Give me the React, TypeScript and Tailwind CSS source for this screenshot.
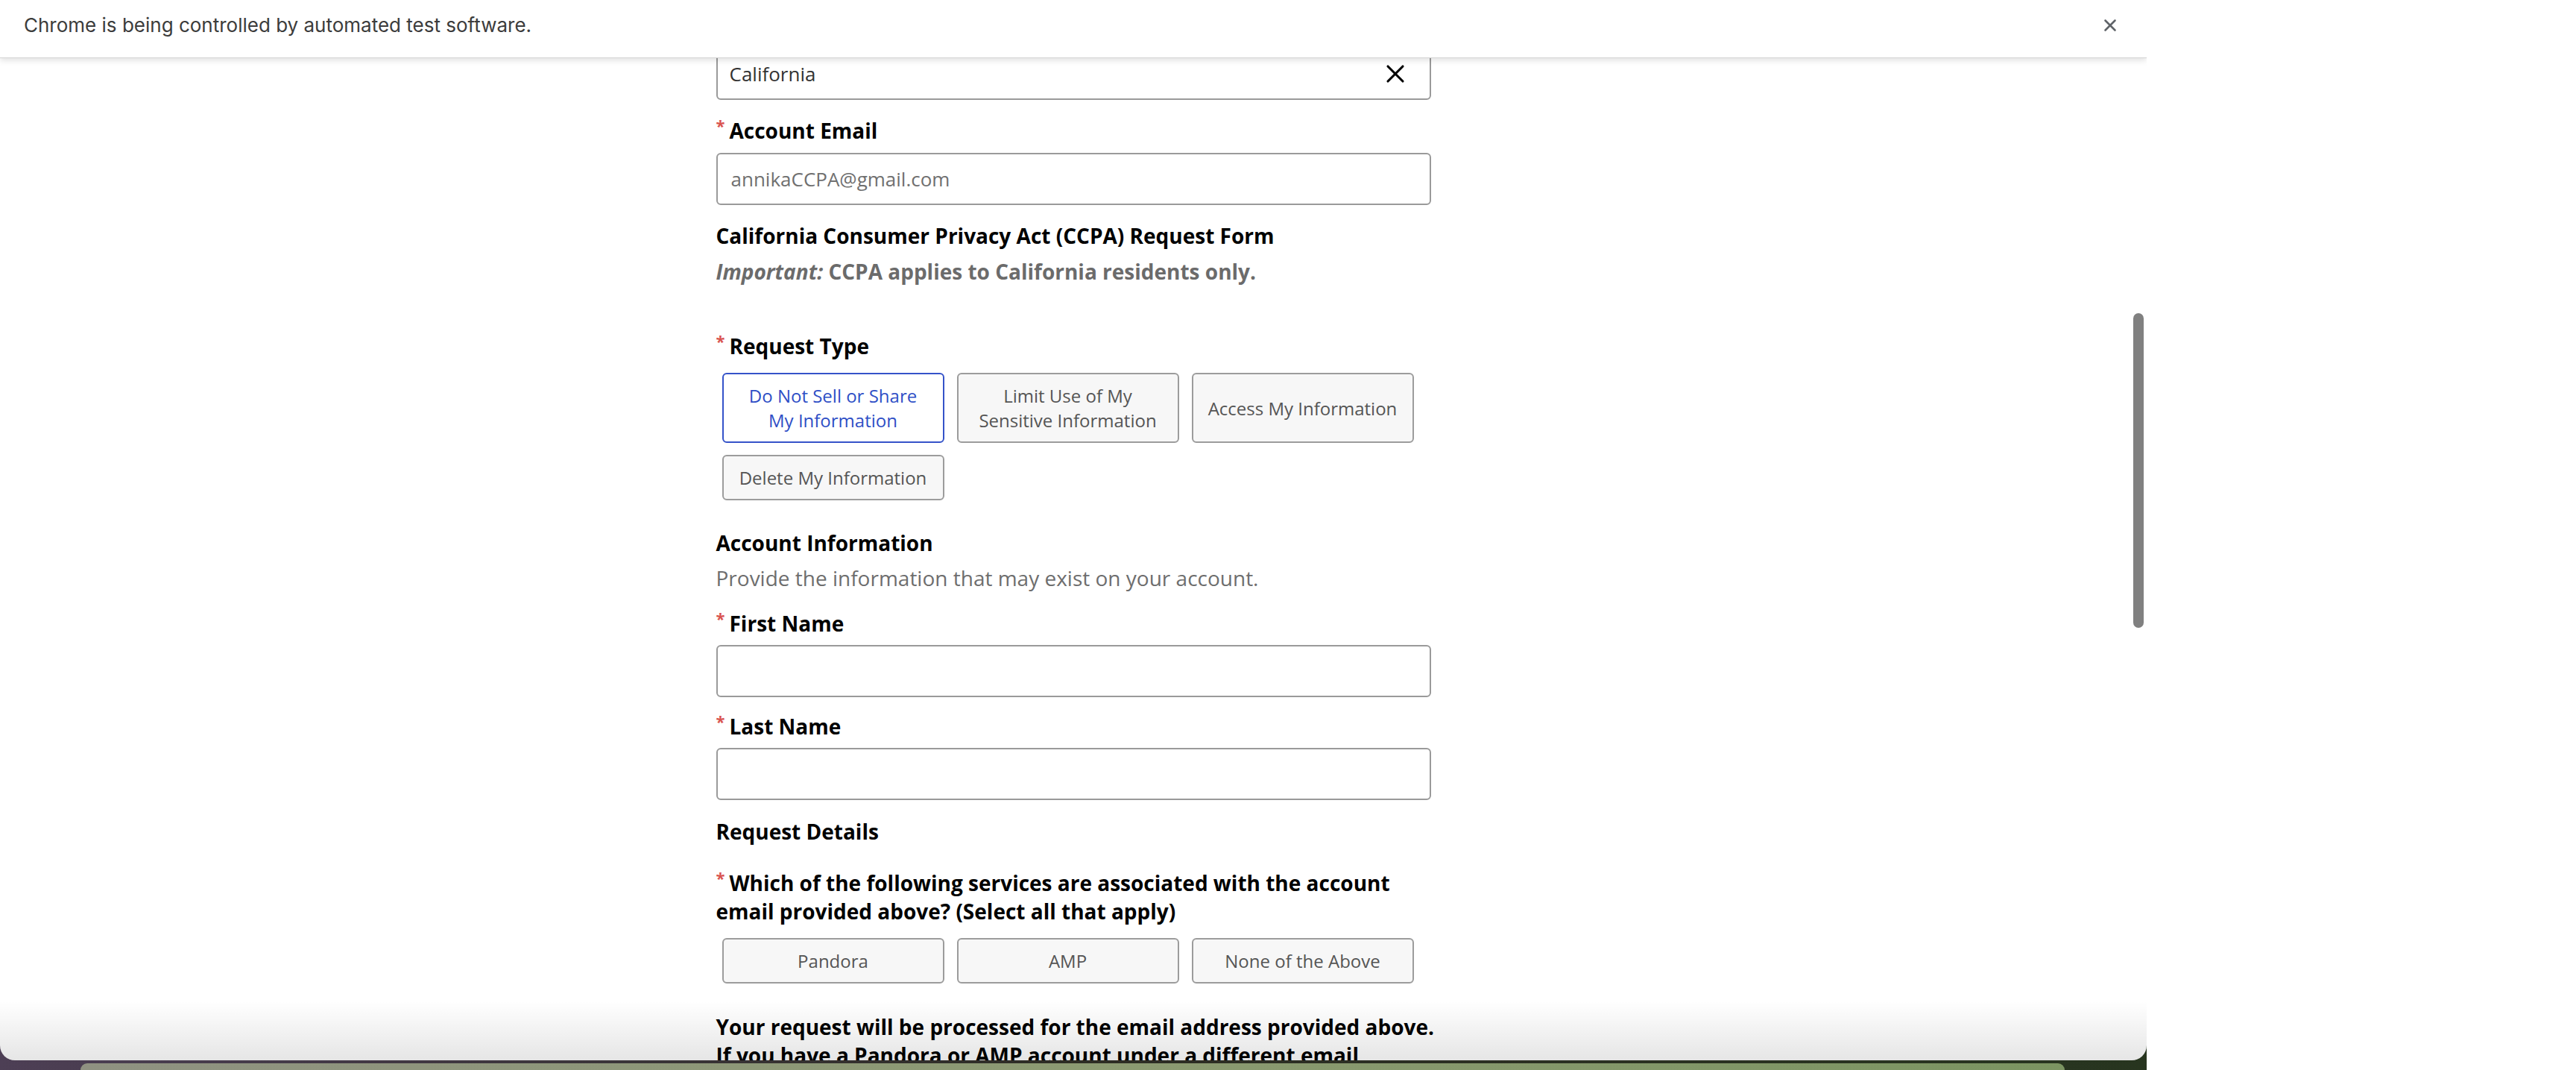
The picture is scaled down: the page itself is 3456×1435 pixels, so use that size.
import { X } from "lucide-react";

const font = { fontFamily: '"Open Sans", "Noto Sans", sans-serif' };

function Req() {
  return (
    <span className="mr-[6px] inline-block align-top text-[22px] leading-[24px] font-bold text-[#d9534f]">
      *
    </span>
  );
}

function Label({ children, required = true }: { children: React.ReactNode; required?: boolean }) {
  return (
    <div className="text-[28px] font-bold leading-[38px] text-black">
      {required && <Req />}
      {children}
    </div>
  );
}

function Field({ value, muted }: { value?: string; muted?: boolean }) {
  return (
    <div
      className={
        "flex h-[70px] items-center rounded-[6px] border-2 border-[#9a9a9a] bg-white px-[18px] text-[26px] " +
        (muted ? "text-[#707070]" : "text-[#333]")
      }
    >
      {value}
    </div>
  );
}

function Choice({ text, selected }: { text: string[]; selected?: boolean }) {
  return (
    <div
      className={
        "flex w-[298px] flex-col items-center justify-center rounded-[6px] border-2 px-[10px] py-[12px] text-center text-[24px] leading-[33px] " +
        (selected
          ? "border-[#3553c9] bg-white text-[#2f4fc6]"
          : "border-[#9c9c9c] bg-[#f7f7f7] text-[#555]")
      }
    >
      {text.map((t) => (
        <span key={t}>{t}</span>
      ))}
    </div>
  );
}

export default function App() {
  return (
    <div className="flex h-[1435px] w-[3456px] overflow-hidden bg-white" style={font}>
      <div className="flex w-[2880px] flex-col bg-gradient-to-r from-[#4d3f55] via-[#2d2c24] to-[#27351f]">
        <div className="relative flex h-[1422px] flex-col overflow-hidden rounded-b-[20px] bg-white">
          {/* automation infobar */}
          <div
            className="relative z-10 flex h-[78px] shrink-0 items-center justify-between border-b border-[#d4d4d4] bg-white pr-[36px] pl-[32px] pb-[10px] shadow-[0_3px_8px_rgba(0,0,0,0.12)]"
            style={{ fontFamily: "Inter, Roboto, sans-serif" }}
          >
            <span className="text-[26px] text-[#3c3c3c]">
              Chrome is being controlled by automated test software.
            </span>
            <X size={26} strokeWidth={2.4} className="text-[#5f6368]" />
          </div>

          <div className="relative flex-1 overflow-hidden">
            <div className="mx-auto -mt-[14px] w-[959px]">
              <div className="flex h-[70px] items-center justify-between rounded-[6px] border-2 border-[#9a9a9a] bg-white pr-[26px] pl-[16px] text-[26px] text-[#333]">
                <span>California</span>
                <X size={40} strokeWidth={1.9} className="text-black" />
              </div>

              <div className="mt-[22px]">
                <Label>Account Email</Label>
              </div>
              <div className="mt-[11px]">
                <Field value="annikaCCPA@gmail.com" muted />
              </div>

              <div className="mt-[22px] text-[28px] font-bold leading-[38px] text-black">
                California Consumer Privacy Act (CCPA) Request Form
              </div>
              <div className="mt-[10px] text-[28px] font-bold leading-[38px] text-[#6b6b6b]">
                <em>Important:</em> CCPA applies to California residents only.
              </div>

              <div className="mt-[62px]">
                <Label>Request Type</Label>
              </div>
              <div className="mt-[17px] flex flex-wrap gap-x-[17px] gap-y-[16px] pl-[8px]">
                <Choice text={["Do Not Sell or Share", "My Information"]} selected />
                <Choice text={["Limit Use of My", "Sensitive Information"]} />
                <Choice text={["Access My Information"]} />
                <Choice text={["Delete My Information"]} />
              </div>

              <div className="mt-[38px]">
                <Label required={false}>Account Information</Label>
              </div>
              <div className="mt-[9px] text-[28px] leading-[38px] text-[#6e6e6e]">
                Provide the information that may exist on your account.
              </div>

              <div className="mt-[23px]">
                <Label>First Name</Label>
              </div>
              <div className="mt-[10px]">
                <Field />
              </div>

              <div className="mt-[20px]">
                <Label>Last Name</Label>
              </div>
              <div className="mt-[10px]">
                <Field />
              </div>

              <div className="mt-[23px]">
                <Label required={false}>Request Details</Label>
              </div>

              <div className="mt-[31px] text-[28px] font-bold leading-[38px] text-black">
                <Req />
                Which of the following services are associated with the account email provided above? (Select all that apply)
              </div>
              <div className="mt-[17px] flex flex-wrap gap-x-[17px] gap-y-[16px] pl-[8px]">
                <Choice text={["Pandora"]} />
                <Choice text={["AMP"]} />
                <Choice text={["None of the Above"]} />
              </div>

              <div className="mt-[39px] text-[28px] font-bold leading-[38px] text-black">
                <div className="whitespace-nowrap">Your request will be processed for the email address provided above.</div>
                <div className="whitespace-nowrap">If you have a Pandora or AMP account under a different email</div>
                <div className="whitespace-nowrap">address, you will need to submit a separate request.</div>
              </div>
            </div>

            {/* scrollbar thumb */}
            <div className="absolute top-[342px] right-[4px] h-[422px] w-[14px] rounded-full bg-[#808080]" />
            {/* bottom shading */}
            <div className="pointer-events-none absolute right-0 bottom-0 left-0 h-[80px] bg-gradient-to-b from-transparent to-black/10" />
          </div>
        </div>

        {/* desktop behind the window */}
        <div className="flex flex-1 items-end pl-[108px] pr-[110px]">
          <div className="h-[9px] w-full rounded-t-[20px] bg-gradient-to-r from-[#8f9181] via-[#8c9a72] to-[#7b9461]" />
        </div>
      </div>
    </div>
  );
}
